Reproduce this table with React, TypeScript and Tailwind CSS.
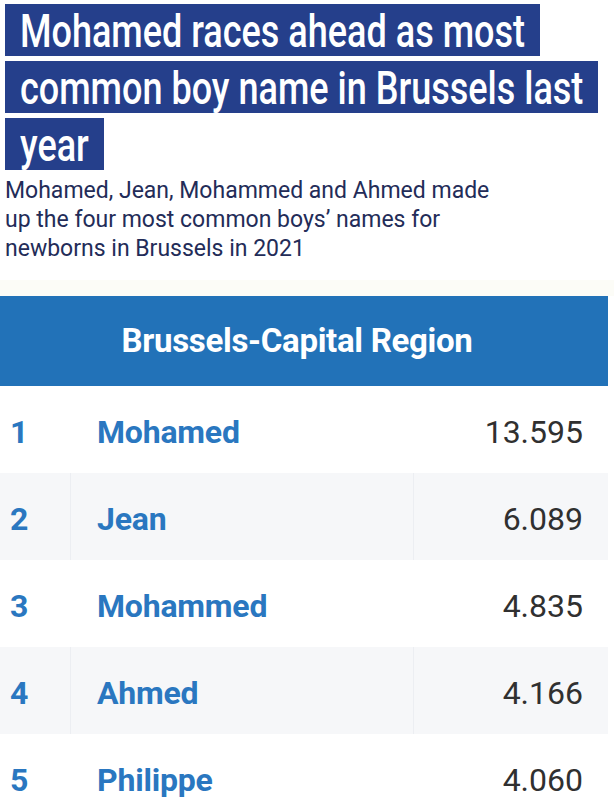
import React, { useLayoutEffect, useRef, useState } from "react";

const rows = [
  { n: "1", name: "Mohamed", v: "13.595" },
  { n: "2", name: "Jean", v: "6.089" },
  { n: "3", name: "Mohammed", v: "4.835" },
  { n: "4", name: "Ahmed", v: "4.166" },
  { n: "5", name: "Philippe", v: "4.060" },
];

const titleLines = ["Mohamed races ahead as most", "common boy name in Brussels last", "year"];

function Title() {
  const refs = useRef<(HTMLSpanElement | null)[]>([]);
  const [widths, setWidths] = useState<number[] | null>(null);
  useLayoutEffect(() => {
    setWidths(refs.current.map((el) => (el ? el.offsetWidth : 0)));
  }, []);
  const scale = widths && widths[0] ? 505 / widths[0] : 0.78;
  return (
    <div className="flex flex-col gap-[5px] pt-[4px] pl-[5px]">
      {titleLines.map((t, i) => (
        <div
          key={i}
          className="w-fit h-[52px] flex items-center pl-[15px] pr-[15px] bg-[#253f8b] text-white overflow-hidden"
        >
          <div
            className="h-[52px] flex items-center"
            style={{ width: widths ? widths[i] * scale : undefined }}
          >
            <span
              ref={(el) => {
                refs.current[i] = el;
              }}
              className="inline-block whitespace-nowrap origin-left text-[47px] leading-none font-medium"
              style={{
                fontFamily: "Roboto, 'Liberation Sans', sans-serif",
                transform: `scaleX(${scale})`,
              }}
            >
              {t}
            </span>
          </div>
        </div>
      ))}
    </div>
  );
}

export default function App() {
  return (
    <div
      className="w-[614px] h-[800px] overflow-hidden bg-white"
      style={{ fontFamily: "Roboto, 'Liberation Sans', sans-serif" }}
    >
      <Title />
      <p className="pl-[5px] pt-[6px] text-[23px] leading-[29px] text-[#232c58]">
        Mohamed, Jean, Mohammed and Ahmed made
        <br />
        up the four most common boys’ names for
        <br />
        newborns in Brussels in 2021
      </p>
      <div className="mt-[17px] h-[16px] bg-[#fcfcf7] w-[614px]" />
      <div className="w-[608px]">
        <div className="h-[90px] bg-[#2272b8] flex items-center justify-center pr-[14px] text-white font-bold text-[33px] tracking-[-0.3px]">
          Brussels-Capital Region
        </div>
        {rows.map((r, i) => {
          const gray = i % 2 === 1;
          return (
            <div
              key={r.n}
              className={`h-[87px] grid grid-cols-[70px_343px_1fr] ${gray ? "bg-[#f6f7f9]" : "bg-white"}`}
            >
              <div className="flex items-center pl-[10px] pt-[4px] text-[32px] font-bold text-[#2a77c0]">{r.n}</div>
              <div
                className={`flex items-center pl-[26px] pt-[4px] text-[32px] font-bold text-[#2a77c0] tracking-[-0.2px] border-l ${gray ? "border-[#eceef2]" : "border-white"}`}
              >
                {r.name}
              </div>
              <div
                className={`flex items-center justify-end pr-[25px] pt-[4px] text-[32px] text-[#303030] border-l ${gray ? "border-[#eceef2]" : "border-white"}`}
              >
                {r.v}
              </div>
            </div>
          );
        })}
      </div>
    </div>
  );
}
